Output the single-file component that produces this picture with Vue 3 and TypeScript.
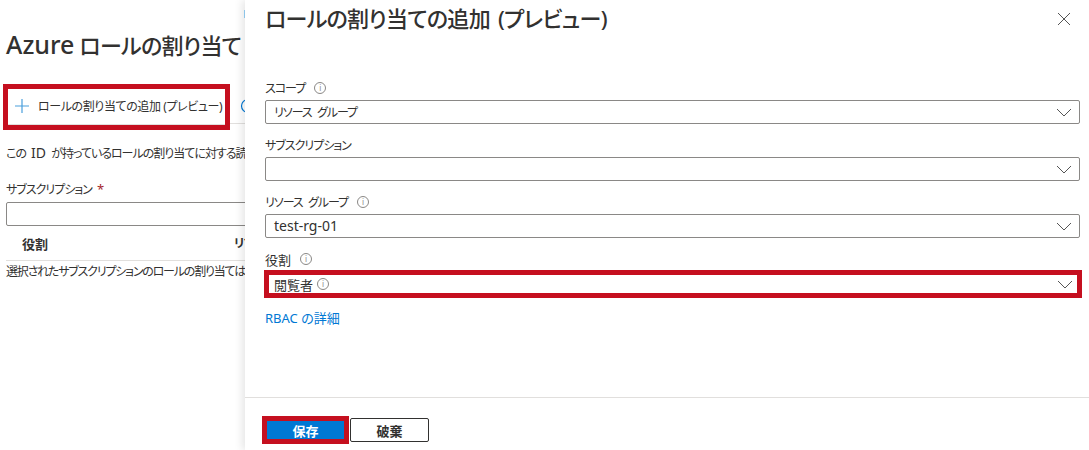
<script setup lang="ts">
interface Field {
  label: string;
  value: string;
  info: boolean;
  latin?: boolean;
}

const fields: Field[] = [
  { label: 'スコープ', value: 'リソース グループ', info: true },
  { label: 'サブスクリプション', value: '', info: false },
  { label: 'リソース グループ', value: 'test-rg-01', info: true, latin: true },
];
</script>

<template>
  <div class="page">
    <main class="main">
      <span class="main__crumb"></span>
      <h1 class="main__title"><span class="main__title-latin">Azure</span> ロールの割り当て</h1>

      <div class="toolbar">
        <button class="cmd cmd--marked" type="button">
          <svg class="cmd__plus" width="16" height="16" viewBox="0 0 16 16">
            <path d="M8 1v14M1 8h14" stroke="#4a9fdc" stroke-width="1.2" fill="none" />
          </svg>
          <span>ロールの割り当ての追加 (プレビュー)</span>
        </button>
        <svg class="cmd__refresh" width="16" height="16" viewBox="0 0 16 16">
          <circle cx="8" cy="8" r="6.5" stroke="#0078d4" stroke-width="1.2" fill="none" />
        </svg>
      </div>

      <p class="main__desc">この <span class="latin">ID</span> が持っているロールの割り当てに対する読み取りアクセス権があります。</p>

      <label class="main__label">サブスクリプション <em>*</em></label>
      <div class="main__input"></div>

      <div class="table-head">
        <span class="kanji">役割</span>
        <span>リソース名</span>
      </div>
      <p class="main__empty">選択されたサブスクリプションのロールの割り当てはありません。</p>
    </main>

    <aside class="blade">
      <header class="blade__head">
        <h2>ロールの割り当ての追加 (プレビュー)</h2>
        <svg width="14" height="14" viewBox="0 0 14 14">
          <path d="M1 1l12 12M13 1L1 13" stroke="#555" stroke-width="1" fill="none" />
        </svg>
      </header>

      <div class="blade__body">
        <div v-for="field in fields" :key="field.label" class="field">
          <div class="field__label">
            <span>{{ field.label }}</span>
            <span v-if="field.info" class="info">i</span>
          </div>
          <div class="select">
            <span :class="{ latin: field.latin }">{{ field.value }}</span>
            <svg class="chevron" width="16" height="9" viewBox="0 0 16 9">
              <path d="M1 1l7 7 7-7" stroke="#555" stroke-width="1" fill="none" />
            </svg>
          </div>
        </div>

        <div class="field">
          <div class="field__label"><span class="kanji">役割</span> <span class="info">i</span></div>
          <div class="select select--marked">
            <span class="kanji">閲覧者</span>
            <span class="info info--inline">i</span>
            <svg class="chevron" width="16" height="9" viewBox="0 0 16 9">
              <path d="M1 1l7 7 7-7" stroke="#555" stroke-width="1" fill="none" />
            </svg>
          </div>
        </div>

        <a class="link">RBAC の詳細</a>
      </div>

      <footer class="blade__foot">
        <button class="btn btn--primary" type="button">保存</button>
        <button class="btn" type="button">破棄</button>
      </footer>
    </aside>
  </div>
</template>

<style scoped>
.page {
  position: relative;
  width: 1089px;
  height: 450px;
  overflow: hidden;
  background: #fff;
  color: #323130;
  font-family: "Noto Sans", "Noto Sans CJK JP", sans-serif;
  font-size: 12px;
  letter-spacing: -1px;
  word-spacing: 3px;
  font-feature-settings: "palt";
}

/* 仮名は詰め、漢字と英数字は通常幅 */
.latin {
  font-size: 14px;
  line-height: 1;
  letter-spacing: 0;
  word-spacing: 0;
}

.kanji {
  font-size: 13px;
  letter-spacing: 0;
  word-spacing: 0;
}

.main {
  width: 400px;
  padding: 30px 0 0 6px;
  box-sizing: border-box;
}

.main__crumb {
  position: absolute;
  left: 244px;
  top: 10px;
  z-index: 2;
  width: 1px;
  height: 8px;
  background: #8cc4e8;
}

.main__title {
  margin: 0;
  font-size: 22px;
  line-height: 30px;
  font-weight: 500;
  letter-spacing: -0.7px;
  word-spacing: 0;
  white-space: nowrap;
}

.main__title-latin {
  font-size: 25px;
  line-height: 1;
  letter-spacing: 0;
}

.toolbar {
  display: flex;
  align-items: center;
  gap: 10px;
  margin: 24px 0 0 -3px;
  height: 46px;
  position: relative;
}

.toolbar::after {
  content: "";
  position: absolute;
  left: 227px;
  right: 0;
  bottom: 6px;
  height: 1px;
  background: #e1dfdd;
}

.cmd {
  display: flex;
  align-items: center;
  gap: 8px;
  width: 227px;
  height: 46px;
  padding: 0 0 2px 6px;
  box-sizing: border-box;
  border: 5px solid #c50f1f;
  background: #fff;
  box-shadow: inset 0 -1px #e1dfdd;
  color: #323130;
  font: inherit;
  letter-spacing: -0.4px;
  word-spacing: 0;
  white-space: nowrap;
}

.cmd__plus {
  flex: none;
}

.cmd__refresh {
  flex: none;
  margin-top: -3px;
}

.main__desc {
  margin: 16px 0 0;
  line-height: 16px;
  white-space: nowrap;
}

.main__label {
  display: block;
  margin-top: 20px;
  line-height: 16px;
}

.main__label em {
  color: #a4262c;
  font-style: normal;
  font-size: 13px;
  line-height: 1;
  letter-spacing: 0;
}

.main__input {
  height: 22px;
  margin-top: 4px;
  border: 1px solid #8a8886;
  border-radius: 2px;
}

.table-head {
  display: flex;
  height: 34px;
  align-items: center;
  padding-left: 16px;
  border-bottom: 1px solid #e1dfdd;
  font-weight: 600;
}

.table-head span:first-child {
  width: 212px;
}

.main__empty {
  margin: 3px 0 0;
  line-height: 16px;
  letter-spacing: -1.2px;
  white-space: nowrap;
}

.blade {
  position: absolute;
  top: 0;
  right: 0;
  bottom: 0;
  left: 245px;
  display: flex;
  flex-direction: column;
  background: #fff;
  box-shadow: -3px 0 8px rgba(0, 0, 0, 0.1);
}

.blade__head {
  display: flex;
  align-items: center;
  justify-content: space-between;
  height: 38px;
  padding: 0 18px 0 20px;
}

.blade__head h2 {
  margin: -3px 0 0;
  font-size: 22px;
  font-weight: 500;
  line-height: 38px;
  letter-spacing: -0.7px;
  word-spacing: 3px;
  white-space: nowrap;
}

.blade__body {
  flex: 1;
  display: flex;
  flex-direction: column;
  gap: 13px;
  padding: 42px 9px 0 20px;
}

.field__label {
  display: flex;
  align-items: center;
  gap: 9px;
  height: 16px;
  margin-bottom: 4px;
}

.select {
  display: flex;
  align-items: center;
  gap: 4px;
  position: relative;
  height: 24px;
  padding: 0 8px;
  box-sizing: border-box;
  border: 1px solid #8a8886;
  border-radius: 2px;
}

.select--marked {
  height: 28px;
  margin: -1px -2px 0 -1px;
  padding: 0 5px;
  border: 5px solid #c50f1f;
  border-radius: 0;
}

.chevron {
  position: absolute;
  right: 7px;
  top: 50%;
  margin-top: -4px;
}

.select--marked .chevron {
  right: 4px;
}

.info {
  display: inline-flex;
  align-items: center;
  justify-content: center;
  width: 10px;
  height: 10px;
  border: 1px solid #8a8886;
  border-radius: 50%;
  color: #8a8886;
  font-size: 8px;
  letter-spacing: 0;
  line-height: 1;
}

.link {
  margin-top: -1px;
  color: #0078d4;
  font-size: 13px;
  letter-spacing: 0;
  word-spacing: 0;
  line-height: 16px;
}

.blade__foot {
  display: flex;
  align-items: center;
  height: 53px;
  box-sizing: border-box;
  padding: 12px 0 0 17px;
  border-top: 1px solid #e1dfdd;
}

.btn {
  width: 79px;
  height: 24px;
  padding: 0;
  border: 1px solid #323130;
  border-radius: 2px;
  background: #fff;
  color: #323130;
  font: inherit;
  font-size: 13px;
  font-weight: 600;
  letter-spacing: 0;
}

.btn--primary {
  width: 87px;
  height: 28px;
  margin-right: 1px;
  border: 5px solid #c50f1f;
  border-radius: 0;
  background: #0078d4;
  color: #fff;
}
</style>
